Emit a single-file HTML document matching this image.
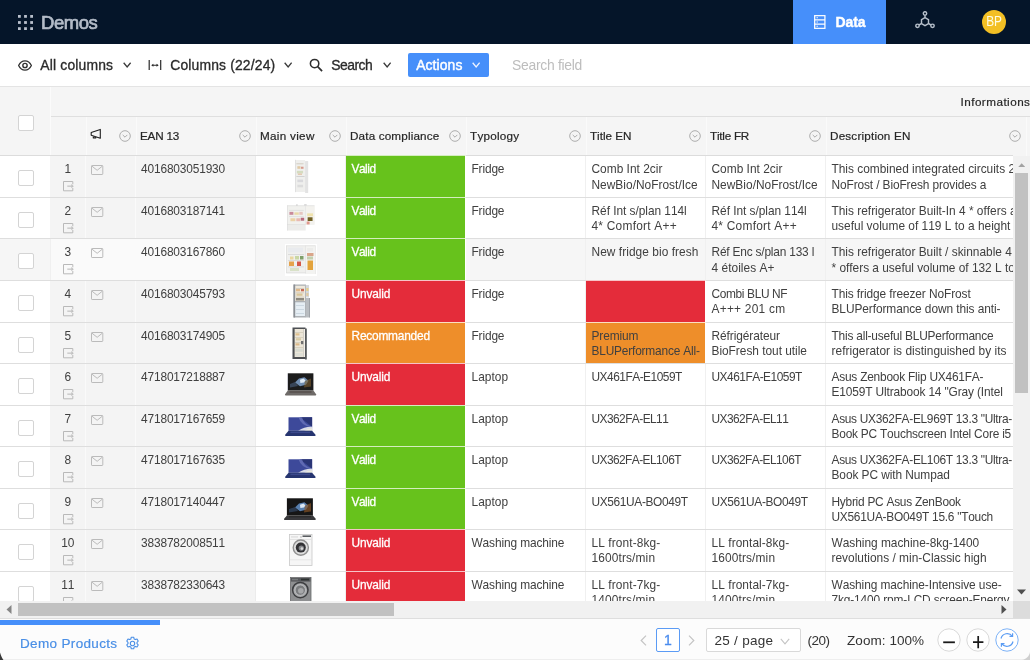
<!DOCTYPE html><html><head><meta charset="utf-8"><title>Demos</title><style>
*{box-sizing:border-box;margin:0;padding:0}
html,body{width:1030px;height:660px;overflow:hidden;background:#fff}
body{position:relative;font-family:"Liberation Sans",sans-serif;color:#262626;font-size:11.900px}
#app{position:absolute;left:0;top:0;width:1030px;height:660px;overflow:hidden;will-change:transform;background:#fff}
.abs{position:absolute}
#top{position:absolute;left:0;top:0;width:1030px;height:44px;background:#051529}
#tb{position:absolute;left:0;top:44px;width:1030px;height:42.400px;background:#fff}
.tbt{position:absolute;top:12.500px;font-size:13.900px;font-kerning:none;line-height:17px;color:#2b2b2b;white-space:nowrap;-webkit-text-stroke:.32px #2b2b2b}
#hd{position:absolute;left:0;top:86px;width:1030px;height:70px;background:#f5f5f5;border-top:1px solid #e4e4e4}
.hl{position:absolute;top:117px;height:38.500px;width:1px;background:#fafafa}
.ht{position:absolute;top:128px;line-height:15px;font-size:11.700px;font-kerning:none;color:#262626;white-space:nowrap;-webkit-text-stroke:.2px #262626}
.row{position:absolute;z-index:0;left:0;width:1013px;height:41.600px;border-top:1px solid #dedede;background:#fff}
.c{position:absolute;top:0;height:42px;border-right:1px solid #f0f0f0;padding:var(--pt) 0 0 5.500px;line-height:var(--lh);font-kerning:none;white-space:nowrap;overflow:hidden;color:#404040}
.g{background:#f4f4f4}
.cb{position:absolute;left:18px;width:16px;height:16px;border:1px solid #d4d4d4;border-radius:2px;background:#fff}
.im{position:absolute}
.st{color:#fff;-webkit-text-stroke:.28px #fff}
#ft{position:absolute;left:0;top:618px;width:1030px;height:42px;background:#fcfcfc;border-top:1px solid #dedede}
.ftt{position:absolute;font-kerning:none;font-size:13.500px;line-height:17px;color:#333;white-space:nowrap}
</style></head><body><svg width="0" height="0" style="position:absolute"><defs><filter id="b" x="-10%" y="-10%" width="120%" height="120%"><feGaussianBlur stdDeviation="0.45"/></filter></defs></svg><div id="app">
<div id="top">
<svg class="abs" style="left:18px;top:15px" width="15" height="15" viewBox="0 0 14 14"><rect x="0" y="0" width="2.600" height="2.600" fill="#b9c0cc"/><rect x="0" y="5.7" width="2.600" height="2.600" fill="#b9c0cc"/><rect x="0" y="11.4" width="2.600" height="2.600" fill="#b9c0cc"/><rect x="5.7" y="0" width="2.600" height="2.600" fill="#b9c0cc"/><rect x="5.7" y="5.7" width="2.600" height="2.600" fill="#b9c0cc"/><rect x="5.7" y="11.4" width="2.600" height="2.600" fill="#b9c0cc"/><rect x="11.4" y="0" width="2.600" height="2.600" fill="#b9c0cc"/><rect x="11.4" y="5.7" width="2.600" height="2.600" fill="#b9c0cc"/><rect x="11.4" y="11.4" width="2.600" height="2.600" fill="#b9c0cc"/></svg>
<div class="abs" style="left:41px;top:11.700px;font-size:18.500px;line-height:22px;color:#b4bcc8;-webkit-text-stroke:.7px #b4bcc8;font-kerning:none"><span style="letter-spacing:-0.475px">Demos</span></div>
<div class="abs" style="left:793px;top:0;width:93px;height:44px;background:#468ffa"></div>
<svg class="abs" style="left:814px;top:15px" width="11.600" height="14" viewBox="0 0 12 15" preserveAspectRatio="none"><rect x=".7" y=".7" width="10.600" height="13.600" fill="none" stroke="#fff" stroke-width="1.300"/><path d="M.7 5.200h10.600M.7 9.800h10.600" stroke="#fff" stroke-width="1.200"/><path d="M2.600 3h1.400M2.600 7.500h1.400M2.600 12h1.400" stroke="#fff" stroke-width="1.200"/></svg>
<div class="abs" style="left:835.400px;top:13px;font-size:14px;line-height:18px;font-weight:bold;color:#fff;-webkit-text-stroke:.4px #fff;font-kerning:none"><span style="letter-spacing:-0.048px">Data</span></div>
<svg class="abs" style="left:915px;top:11px" width="20" height="18" viewBox="0 0 20 18"><g fill="none" stroke="#b7bfca" stroke-width="1.450"><circle cx="10" cy="2.400" r="1.700"/><circle cx="2.500" cy="14.800" r="1.700"/><circle cx="17.500" cy="14.800" r="1.700"/><path d="M10 4.100v2.500M4 14l2.300-1.300M16 14l-2.300-1.300"/><path d="M10 6.600l3.500 2v4l-3.500 2-3.500-2v-4z"/></g></svg>
<div class="abs" style="left:982px;top:10px;width:24px;height:24px;border-radius:12px;background:#f3bf24;color:#fffbe2;font-size:13.800px;line-height:24.500px;text-align:center"><span style="display:inline-block;transform:scaleX(.86);letter-spacing:-.2px">BP</span></div>
</div>
<div id="tb">
<svg class="abs" style="left:18px;top:15.500px" width="14" height="11" viewBox="0 0 14 11"><path d="M.6 5.500C2.200 2.300 4.400.9 7 .9s4.800 1.400 6.400 4.600C11.800 8.700 9.600 10.100 7 10.100S2.200 8.700.6 5.500z" fill="none" stroke="#333" stroke-width="1.300"/><circle cx="7" cy="5.500" r="2.150" fill="none" stroke="#333" stroke-width="1.400"/></svg>
<div class="tbt" style="left:40.300px"><span style="letter-spacing:0.173px">All columns</span></div>
<svg style="position:absolute;left:123.4px;top:18px" width="8.3" height="5.81" viewBox="0 0 10 7"><path d="M0.800 0.900L5 5.900l4.200-5" fill="none" stroke="#3a3a3a" stroke-width="1.57"/></svg>
<svg class="abs" style="left:148px;top:15.600px" width="14" height="10.500" viewBox="0 0 14 10.500"><path d="M1.200 0v10.500M12.700 0v10.500" fill="none" stroke="#2a2a2a" stroke-width="1.200"/><path d="M4.500 5.250h5" stroke="#2a2a2a" stroke-width="1"/><path d="M3.200 5.250l2.200-1.500v3zM10.700 5.250l-2.200-1.500v3z" fill="#2a2a2a"/></svg>
<div class="tbt" style="left:170.300px"><span style="letter-spacing:0.154px">Columns (22/24)</span></div>
<svg style="position:absolute;left:283.6px;top:18px" width="8.3" height="5.81" viewBox="0 0 10 7"><path d="M0.800 0.900L5 5.900l4.200-5" fill="none" stroke="#3a3a3a" stroke-width="1.57"/></svg>
<svg class="abs" style="left:309px;top:14px" width="14" height="14" viewBox="0 0 14 14"><circle cx="5.600" cy="5.600" r="4.200" fill="none" stroke="#2e2e2e" stroke-width="1.550"/><path d="M8.700 8.700l4.400 4.400" stroke="#2e2e2e" stroke-width="1.700"/></svg>
<div class="tbt" style="left:331.300px"><span style="letter-spacing:-0.528px">Search</span></div>
<svg style="position:absolute;left:382.6px;top:18px" width="8.3" height="5.81" viewBox="0 0 10 7"><path d="M0.800 0.900L5 5.900l4.200-5" fill="none" stroke="#3a3a3a" stroke-width="1.57"/></svg>
<div class="abs" style="left:408px;top:9px;width:81px;height:24px;background:#468ffa;border-radius:2px"></div>
<div class="tbt" style="left:416.200px;color:#fff;-webkit-text-stroke:.45px #fff"><span style="letter-spacing:0.103px">Actions</span></div>
<svg style="position:absolute;left:471.6px;top:18px" width="8.3" height="5.81" viewBox="0 0 10 7"><path d="M0.800 0.900L5 5.900l4.200-5" fill="none" stroke="#eef4ff" stroke-width="1.57"/></svg>
<div class="tbt" style="left:512px;color:#bdbdbd;-webkit-text-stroke:0"><span style="letter-spacing:-0.273px">Search field</span></div>
</div>
<div id="hd"></div>
<div class="abs" style="left:50px;top:116px;width:980px;height:1px;background:#dfdfdf"></div>
<div class="abs" style="left:50px;top:87px;width:1px;height:69px;background:#fbfbfb"></div>
<div class="hl" style="left:85.5px"></div>
<div class="hl" style="left:135.5px"></div>
<div class="hl" style="left:255.5px"></div>
<div class="hl" style="left:345.5px"></div>
<div class="hl" style="left:465.5px"></div>
<div class="hl" style="left:585.5px"></div>
<div class="hl" style="left:705.5px"></div>
<div class="hl" style="left:825.5px"></div>
<div class="hl" style="left:1025.5px"></div>
<div class="cb" style="top:115px"></div>
<div class="ht" style="left:960.500px;top:94px"><span style="letter-spacing:0.466px">Informations</span></div>
<svg class="abs" style="left:90px;top:128px" width="12" height="12" viewBox="0 0 12 12"><path d="M1.200 4.400L10.300 1.400v8.800L1.200 7.200z M3.300 7.900v2h2.400V8.700" fill="none" stroke="#1f1f1f" stroke-width="1.100" stroke-linejoin="round"/></svg>
<svg style="position:absolute;left:119px;top:129.7px" width="12" height="12" viewBox="0 0 12 12"><circle cx="6" cy="6" r="5.300" fill="none" stroke="#adadad" stroke-width="1"/><path d="M3.700 4.900l2.300 2.300L8.300 4.900" fill="none" stroke="#adadad" stroke-width="1"/></svg>
<div class="ht" style="left:140.0px"><span style="letter-spacing:-0.184px">EAN 13</span></div>
<svg style="position:absolute;left:239.2px;top:129.7px" width="12" height="12" viewBox="0 0 12 12"><circle cx="6" cy="6" r="5.300" fill="none" stroke="#adadad" stroke-width="1"/><path d="M3.700 4.900l2.300 2.300L8.300 4.900" fill="none" stroke="#adadad" stroke-width="1"/></svg>
<div class="ht" style="left:260.0px"><span style="letter-spacing:0.298px">Main view</span></div>
<svg style="position:absolute;left:329.2px;top:129.7px" width="12" height="12" viewBox="0 0 12 12"><circle cx="6" cy="6" r="5.300" fill="none" stroke="#adadad" stroke-width="1"/><path d="M3.700 4.900l2.300 2.300L8.300 4.900" fill="none" stroke="#adadad" stroke-width="1"/></svg>
<div class="ht" style="left:350.0px"><span style="letter-spacing:0.154px">Data compliance</span></div>
<svg style="position:absolute;left:449.2px;top:129.7px" width="12" height="12" viewBox="0 0 12 12"><circle cx="6" cy="6" r="5.300" fill="none" stroke="#adadad" stroke-width="1"/><path d="M3.700 4.900l2.300 2.300L8.300 4.900" fill="none" stroke="#adadad" stroke-width="1"/></svg>
<div class="ht" style="left:470.0px"><span style="letter-spacing:0.247px">Typology</span></div>
<svg style="position:absolute;left:569.2px;top:129.7px" width="12" height="12" viewBox="0 0 12 12"><circle cx="6" cy="6" r="5.300" fill="none" stroke="#adadad" stroke-width="1"/><path d="M3.700 4.900l2.300 2.300L8.300 4.900" fill="none" stroke="#adadad" stroke-width="1"/></svg>
<div class="ht" style="left:590.0px"><span style="letter-spacing:-0.030px">Title EN</span></div>
<svg style="position:absolute;left:689.2px;top:129.7px" width="12" height="12" viewBox="0 0 12 12"><circle cx="6" cy="6" r="5.300" fill="none" stroke="#adadad" stroke-width="1"/><path d="M3.700 4.900l2.300 2.300L8.300 4.900" fill="none" stroke="#adadad" stroke-width="1"/></svg>
<div class="ht" style="left:710.0px"><span style="letter-spacing:-0.236px">Title FR</span></div>
<svg style="position:absolute;left:809.2px;top:129.7px" width="12" height="12" viewBox="0 0 12 12"><circle cx="6" cy="6" r="5.300" fill="none" stroke="#adadad" stroke-width="1"/><path d="M3.700 4.900l2.300 2.300L8.300 4.900" fill="none" stroke="#adadad" stroke-width="1"/></svg>
<div class="ht" style="left:830.0px"><span style="letter-spacing:0.190px">Description EN</span></div>
<svg style="position:absolute;left:1009.2px;top:129.7px" width="12" height="12" viewBox="0 0 12 12"><circle cx="6" cy="6" r="5.300" fill="none" stroke="#adadad" stroke-width="1"/><path d="M3.700 4.900l2.300 2.300L8.300 4.900" fill="none" stroke="#adadad" stroke-width="1"/></svg>
<div class="row" style="top:155px;height:42px;--pt:5.37px;--lh:16px;border-top-color:#dcdcdc">
<div class="c" style="left:0;width:50.500px;background:#fff;border-right-color:#f4f4f4"></div>
<div class="cb" style="top:14px"></div>
<div class="c" style="left:50.500px;width:35.500px;background:#f4f4f4;border-right-color:#fafafa;padding-left:0;text-align:center">1</div>
<div class="abs" style="left:0;top:.5px;z-index:2"><svg style="position:absolute;left:62.600px;top:24.200px" width="12" height="12" viewBox="0 0 12 12"><path d="M9.800 3.300V.5H.5v9.300h9.300V7" fill="none" stroke="#b9b9b9" stroke-width="1"/><path d="M4.300 5.150h4.500" fill="none" stroke="#c0c0c0" stroke-width="1.200"/><path d="M8.300 3.100l2.500 2.050L8.300 7.200z" fill="#c0c0c0"/></svg><svg style="position:absolute;left:90.600px;top:8.200px" width="13" height="11" viewBox="0 0 13 11"><rect x=".5" y=".5" width="11.300" height="9" rx=".6" fill="none" stroke="#bbbbbb" stroke-width="1"/><path d="M1 1.200l5.150 4.100L11.300 1.200" fill="none" stroke="#bbbbbb" stroke-width="1"/></svg></div>
<div class="abs" style="left:0;top:0.50px;z-index:2"><svg class="im" style="left:293.600px;top:2.700px" width="16" height="35" viewBox="0 0 15 34"><g filter="url(#b)"><rect x="1" y="1" width="9.5" height="31" fill="#efefed"/><rect x="10.5" y="2" width="3" height="31" fill="#e3e3e3"/><rect x="0.8" y="0.8" width="0.7" height="31.4" fill="#d9d9d9"/><rect x="2" y="4" width="7" height="1.2" fill="#d8d4ca"/><rect x="3" y="7" width="3" height="2.5" fill="#e0c9a4"/><rect x="6.5" y="7.5" width="2.5" height="2" fill="#d69a8c"/><rect x="2.5" y="11.5" width="6" height="2.5" fill="#d4dcc0"/><rect x="2" y="16.5" width="8" height="1" fill="#d2d2d2"/><rect x="3" y="20" width="5.5" height="2.5" fill="#d9d9dc"/><rect x="3" y="25" width="5.5" height="2.5" fill="#dcdcdc"/><rect x="3.5" y="14" width="4" height="1.5" fill="#e3c9b0"/></g></svg></div>
<div class="c" style="left:86px;width:50px;background:#f4f4f4;border-right-color:#fafafa"></div>
<div class="c" style="left:136px;width:120px;background:#f4f4f4;border-right-color:#ececec;padding-left:5.100px"><span style="letter-spacing:-0.157px">4016803051930</span></div>
<div class="c" style="left:256px;width:90px;background:#fff"></div>
<div class="c st" style="left:346px;width:120px;background:#67c21c;border-right:1.400px solid #fff;border-top:1px solid #d4edbf;margin-top:-1px;height:43px;padding-top:var(--pt)"><span style="letter-spacing:-0.465px">Valid</span></div>
<div class="c" style="left:466px;width:120px;background:#fff"><span style="letter-spacing:-0.149px">Fridge</span></div>
<div class="c" style="left:586px;width:120px;background:#fff"><span style="letter-spacing:0.012px">Comb Int 2cir</span><br><span style="letter-spacing:0.026px">NewBio/NoFrost/Ice</span></div>
<div class="c" style="left:706px;width:120px;background:#fff"><span style="letter-spacing:0.012px">Comb Int 2cir</span><br><span style="letter-spacing:0.026px">NewBio/NoFrost/Ice</span></div>
<div class="c" style="left:826px;width:200px;background:#fff"><span style="letter-spacing:-0.007px">This combined integrated circuits 2</span><br><span style="letter-spacing:-0.112px">NoFrost / BioFresh provides a</span></div>
</div>
<div class="row" style="top:197px;height:41px;--pt:5.87px;--lh:15px">
<div class="c" style="left:0;width:50.500px;background:#fff;border-right-color:#f4f4f4"></div>
<div class="cb" style="top:14px"></div>
<div class="c" style="left:50.500px;width:35.500px;background:#f4f4f4;border-right-color:#fafafa;padding-left:0;text-align:center">2</div>
<div class="abs" style="left:0;top:.5px;z-index:2"><svg style="position:absolute;left:62.600px;top:24.200px" width="12" height="12" viewBox="0 0 12 12"><path d="M9.800 3.300V.5H.5v9.300h9.300V7" fill="none" stroke="#b9b9b9" stroke-width="1"/><path d="M4.300 5.150h4.500" fill="none" stroke="#c0c0c0" stroke-width="1.200"/><path d="M8.300 3.100l2.500 2.050L8.300 7.200z" fill="#c0c0c0"/></svg><svg style="position:absolute;left:90.600px;top:8.200px" width="13" height="11" viewBox="0 0 13 11"><rect x=".5" y=".5" width="11.300" height="9" rx=".6" fill="none" stroke="#bbbbbb" stroke-width="1"/><path d="M1 1.200l5.150 4.100L11.300 1.200" fill="none" stroke="#bbbbbb" stroke-width="1"/></svg></div>
<div class="abs" style="left:0;top:0.10px;z-index:2"><svg class="im" style="left:285.700px;top:6.300px" width="30.500" height="28.500" viewBox="0 0 30 29"><g filter="url(#b)"><rect x="0.5" y="1.5" width="28" height="19.5" fill="#f1f1ee"/><rect x="0.5" y="21" width="19" height="6" fill="#ececea"/><rect x="19.5" y="2" width="9" height="19" fill="#f3f2ee"/><rect x="0.5" y="1.5" width="28" height="0.7" fill="#dedede"/><rect x="0.5" y="1.5" width="0.7" height="25.5" fill="#dedede"/><rect x="19" y="2" width="0.6" height="19" fill="#e2e2e2"/><rect x="0.5" y="20.7" width="19" height="0.6" fill="#dadada"/><rect x="2.5" y="6" width="15" height="0.8" fill="#dcdcdc"/><rect x="3" y="8" width="4" height="3" fill="#c98a9a"/><rect x="8" y="8.5" width="4.5" height="2.5" fill="#ead9a8"/><rect x="13" y="8" width="3.5" height="3" fill="#e6c5c0"/><rect x="2.5" y="12.5" width="15" height="0.8" fill="#dcdcdc"/><rect x="4" y="14.5" width="5" height="3" fill="#ecd2a6"/><rect x="10" y="14.5" width="4" height="3" fill="#e9b9b0"/><rect x="14.5" y="14" width="3.5" height="3" fill="#b86a7c"/><rect x="21.5" y="13.5" width="5" height="3.8" fill="#6f5f24"/><rect x="21" y="9.5" width="6" height="3" fill="#efe2ae"/><rect x="20.5" y="17.8" width="3" height="3" fill="#e0978c"/><rect x="10" y="0.4" width="1.2" height="1.2" fill="#bdbdbd"/><rect x="18" y="0.4" width="2.5" height="1" fill="#c4c4c4"/></g></svg></div>
<div class="c" style="left:86px;width:50px;background:#f4f4f4;border-right-color:#fafafa"></div>
<div class="c" style="left:136px;width:120px;background:#f4f4f4;border-right-color:#ececec;padding-left:5.100px"><span style="letter-spacing:-0.157px">4016803187141</span></div>
<div class="c" style="left:256px;width:90px;background:#fff"></div>
<div class="c st" style="left:346px;width:120px;background:#67c21c;border-right:1.400px solid #fff;border-top:1px solid #d4edbf;margin-top:-1px;height:43px;padding-top:var(--pt)"><span style="letter-spacing:-0.465px">Valid</span></div>
<div class="c" style="left:466px;width:120px;background:#fff"><span style="letter-spacing:-0.149px">Fridge</span></div>
<div class="c" style="left:586px;width:120px;background:#fff"><span style="letter-spacing:-0.034px">Réf Int s/plan 114l</span><br><span style="letter-spacing:0.247px">4* Comfort A++</span></div>
<div class="c" style="left:706px;width:120px;background:#fff"><span style="letter-spacing:-0.034px">Réf Int s/plan 114l</span><br><span style="letter-spacing:0.247px">4* Comfort A++</span></div>
<div class="c" style="left:826px;width:200px;background:#fff"><span style="letter-spacing:-0.001px">This refrigerator Built-In 4 * offers a</span><br><span style="letter-spacing:0.011px">useful volume of 119 L to a height</span></div>
</div>
<div class="row" style="top:238px;height:42px;--pt:5.37px;--lh:16px">
<div class="c" style="left:0;width:50.500px;background:#f6f6f6;border-right-color:#f0f0f0"></div>
<div class="cb" style="top:14px"></div>
<div class="c" style="left:50.500px;width:35.500px;background:#fafafa;border-right-color:#fafafa;padding-left:0;text-align:center">3</div>
<div class="abs" style="left:0;top:.5px;z-index:2"><svg style="position:absolute;left:62.600px;top:24.200px" width="12" height="12" viewBox="0 0 12 12"><path d="M9.800 3.300V.5H.5v9.300h9.300V7" fill="none" stroke="#b9b9b9" stroke-width="1"/><path d="M4.300 5.150h4.500" fill="none" stroke="#c0c0c0" stroke-width="1.200"/><path d="M8.300 3.100l2.500 2.050L8.300 7.200z" fill="#c0c0c0"/></svg><svg style="position:absolute;left:90.600px;top:8.200px" width="13" height="11" viewBox="0 0 13 11"><rect x=".5" y=".5" width="11.300" height="9" rx=".6" fill="none" stroke="#bbbbbb" stroke-width="1"/><path d="M1 1.200l5.150 4.100L11.300 1.200" fill="none" stroke="#bbbbbb" stroke-width="1"/></svg></div>
<div class="abs" style="left:0;top:0.70px;z-index:2"><svg class="im" style="left:284.7px;top:4.1px" width="32" height="32" viewBox="0 0 32 32"><g filter="url(#b)"><rect x="0" y="0" width="32" height="32" fill="#ffffff"/><rect x="1.2" y="1.5" width="19.5" height="27.5" fill="#f0f0ee"/><rect x="20.5" y="1" width="10" height="29" fill="#f3f3f1"/><rect x="1.2" y="1.5" width="0.7" height="27.5" fill="#dcdcdc"/><rect x="1.2" y="1.5" width="29" height="0.7" fill="#e0e0e0"/><rect x="20.3" y="1.5" width="0.6" height="28" fill="#dedede"/><rect x="1.2" y="28.6" width="19.5" height="0.7" fill="#d8d8d8"/><rect x="30" y="1.5" width="0.6" height="28.5" fill="#e2e2e2"/><rect x="3" y="3.5" width="15" height="5" fill="#e9ebee"/><rect x="3" y="10" width="16" height="0.8" fill="#d6d6d6"/><rect x="3" y="16" width="16" height="0.8" fill="#d6d6d6"/><rect x="3" y="22.5" width="16" height="0.8" fill="#d6d6d6"/><rect x="4" y="17.5" width="5" height="4.5" fill="#e5a24c"/><rect x="10" y="12" width="4" height="3.5" fill="#c9d7a4"/><rect x="12" y="17.5" width="4" height="4.5" fill="#d4584a"/><rect x="15" y="12" width="3.5" height="3.5" fill="#7fa06a"/><rect x="5" y="12.5" width="3.5" height="3" fill="#ead7a0"/><rect x="5" y="24" width="9" height="3" fill="#d9e2c8"/><rect x="22.5" y="16.5" width="5.5" height="9.5" fill="#e3a33e"/><rect x="22" y="9" width="6.5" height="3" fill="#d9a58a"/><rect x="22" y="12.5" width="6" height="3" fill="#c3cfae"/><rect x="22" y="4" width="6" height="3.5" fill="#ececea"/></g></svg></div>
<div class="c" style="left:86px;width:50px;background:#fafafa;border-right-color:#fafafa"></div>
<div class="c" style="left:136px;width:120px;background:#fafafa;border-right-color:#ececec;padding-left:5.100px"><span style="letter-spacing:-0.157px">4016803167860</span></div>
<div class="c" style="left:256px;width:90px;background:#f6f6f6"></div>
<div class="c st" style="left:346px;width:120px;background:#67c21c;border-right:1.400px solid #fff;border-top:1px solid #d4edbf;margin-top:-1px;height:43px;padding-top:var(--pt)"><span style="letter-spacing:-0.465px">Valid</span></div>
<div class="c" style="left:466px;width:120px;background:#f6f6f6"><span style="letter-spacing:-0.149px">Fridge</span></div>
<div class="c" style="left:586px;width:120px;background:#f6f6f6"><span style="letter-spacing:0.061px">New fridge bio fresh</span></div>
<div class="c" style="left:706px;width:120px;background:#f6f6f6"><span style="letter-spacing:-0.191px">Réf Enc s/plan 133 l</span><br><span style="letter-spacing:0.042px">4 étoiles A+</span></div>
<div class="c" style="left:826px;width:200px;background:#f6f6f6"><span style="letter-spacing:-0.002px">This refrigerator Built / skinnable 4</span><br><span style="letter-spacing:-0.013px">* offers a useful volume of 132 L to</span></div>
</div>
<div class="row" style="top:280px;height:42px;--pt:5.87px;--lh:15px">
<div class="c" style="left:0;width:50.500px;background:#fff;border-right-color:#f4f4f4"></div>
<div class="cb" style="top:14px"></div>
<div class="c" style="left:50.500px;width:35.500px;background:#f4f4f4;border-right-color:#fafafa;padding-left:0;text-align:center">4</div>
<div class="abs" style="left:0;top:.5px;z-index:2"><svg style="position:absolute;left:62.600px;top:24.200px" width="12" height="12" viewBox="0 0 12 12"><path d="M9.800 3.300V.5H.5v9.300h9.300V7" fill="none" stroke="#b9b9b9" stroke-width="1"/><path d="M4.300 5.150h4.500" fill="none" stroke="#c0c0c0" stroke-width="1.200"/><path d="M8.300 3.100l2.500 2.050L8.300 7.200z" fill="#c0c0c0"/></svg><svg style="position:absolute;left:90.600px;top:8.200px" width="13" height="11" viewBox="0 0 13 11"><rect x=".5" y=".5" width="11.300" height="9" rx=".6" fill="none" stroke="#bbbbbb" stroke-width="1"/><path d="M1 1.200l5.150 4.100L11.300 1.200" fill="none" stroke="#bbbbbb" stroke-width="1"/></svg></div>
<div class="abs" style="left:0;top:0.30px;z-index:2"><svg class="im" style="left:292.6px;top:3px" width="18" height="34.5" viewBox="0 0 18 34.5"><g filter="url(#b)"><rect x="0.5" y="0.5" width="12.5" height="33" fill="#aeb2b6"/><rect x="0.5" y="0.5" width="1.6" height="33" fill="#8c9095"/><rect x="2.3" y="1.8" width="9.7" height="15.2" fill="#efe9dc"/><rect x="2.3" y="18.3" width="9.7" height="13.7" fill="#e6eef4"/><rect x="12.8" y="14" width="4" height="19.5" fill="#b9bdc1"/><rect x="12.8" y="1" width="3.2" height="12.5" fill="#d5d8da"/><rect x="16.3" y="14" width="0.7" height="19.5" fill="#8f9398"/><rect x="3" y="4" width="8" height="0.7" fill="#c9c2b2"/><rect x="3" y="5" width="4" height="2.3" fill="#e0b98a"/><rect x="8" y="5" width="3" height="2.3" fill="#c96a55"/><rect x="3" y="8.5" width="8" height="0.7" fill="#c9c2b2"/><rect x="3.5" y="9.5" width="6" height="2.3" fill="#d8c59a"/><rect x="3" y="12.7" width="8" height="0.7" fill="#c9c2b2"/><rect x="3" y="14" width="8" height="2.5" fill="#8e8a80"/><rect x="3" y="21" width="8" height="0.8" fill="#c6d3dc"/><rect x="3" y="25" width="8" height="0.8" fill="#c6d3dc"/><rect x="3" y="29" width="8" height="0.8" fill="#c6d3dc"/><rect x="13.3" y="4" width="2.2" height="3" fill="#e3cf8a"/><rect x="13.3" y="9" width="2.2" height="3" fill="#e0c9a0"/></g></svg></div>
<div class="c" style="left:86px;width:50px;background:#f4f4f4;border-right-color:#fafafa"></div>
<div class="c" style="left:136px;width:120px;background:#f4f4f4;border-right-color:#ececec;padding-left:5.100px"><span style="letter-spacing:-0.157px">4016803045793</span></div>
<div class="c" style="left:256px;width:90px;background:#fff"></div>
<div class="c st" style="left:346px;width:120px;background:#e42c3a;border-right:1.400px solid #fff;border-top:1px solid #f7c3c7;margin-top:-1px;height:43px;padding-top:var(--pt)"><span style="letter-spacing:-0.131px">Unvalid</span></div>
<div class="c" style="left:466px;width:120px;background:#fff"><span style="letter-spacing:-0.149px">Fridge</span></div>
<div class="c" style="left:586px;width:120px;background:#e42c3a;border-right:1.400px solid #fff;border-top:1px solid #f7c3c7;margin-top:-1px;height:43px"></div>
<div class="c" style="left:706px;width:120px;background:#fff"><span style="letter-spacing:-0.352px">Combi BLU NF</span><br><span style="letter-spacing:0.257px">A+++ 201 cm</span></div>
<div class="c" style="left:826px;width:200px;background:#fff"><span style="letter-spacing:-0.085px">This fridge freezer NoFrost</span><br><span style="letter-spacing:-0.076px">BLUPerformance down this anti-</span></div>
</div>
<div class="row" style="top:322px;height:41px;--pt:5.87px;--lh:15px">
<div class="c" style="left:0;width:50.500px;background:#fff;border-right-color:#f4f4f4"></div>
<div class="cb" style="top:14px"></div>
<div class="c" style="left:50.500px;width:35.500px;background:#f4f4f4;border-right-color:#fafafa;padding-left:0;text-align:center">5</div>
<div class="abs" style="left:0;top:.5px;z-index:2"><svg style="position:absolute;left:62.600px;top:24.200px" width="12" height="12" viewBox="0 0 12 12"><path d="M9.800 3.300V.5H.5v9.300h9.300V7" fill="none" stroke="#b9b9b9" stroke-width="1"/><path d="M4.300 5.150h4.500" fill="none" stroke="#c0c0c0" stroke-width="1.200"/><path d="M8.300 3.100l2.500 2.050L8.300 7.200z" fill="#c0c0c0"/></svg><svg style="position:absolute;left:90.600px;top:8.200px" width="13" height="11" viewBox="0 0 13 11"><rect x=".5" y=".5" width="11.300" height="9" rx=".6" fill="none" stroke="#bbbbbb" stroke-width="1"/><path d="M1 1.200l5.150 4.100L11.300 1.200" fill="none" stroke="#bbbbbb" stroke-width="1"/></svg></div>
<div class="abs" style="left:0;top:-0.10px;z-index:2"><svg class="im" style="left:292.4px;top:3.7px" width="16" height="33" viewBox="0 0 16 33"><g filter="url(#b)"><rect x="0.5" y="0.5" width="13" height="31.5" fill="#4d4f52"/><rect x="2.6" y="2" width="9.2" height="28" fill="#ece6d8"/><rect x="13" y="1.5" width="1.8" height="31" fill="#55585b"/><rect x="11.8" y="2" width="1.2" height="28" fill="#f4f1ea"/><rect x="3" y="5" width="8" height="0.7" fill="#cfc7b5"/><rect x="3.5" y="6.3" width="4" height="2.2" fill="#e0c08e"/><rect x="3" y="10" width="8" height="0.7" fill="#cfc7b5"/><rect x="4" y="11.2" width="5" height="2.2" fill="#d9cba4"/><rect x="3" y="15" width="8" height="0.7" fill="#cfc7b5"/><rect x="9" y="14" width="2.3" height="3.2" fill="#6f6f6f"/><rect x="3.5" y="16.3" width="4" height="2.2" fill="#dcb98a"/><rect x="3" y="20" width="8" height="0.7" fill="#cfc7b5"/><rect x="3.3" y="21.5" width="7.5" height="3.3" fill="#d7dad0"/><rect x="3.3" y="26" width="7.5" height="3.3" fill="#dedfd6"/></g></svg></div>
<div class="c" style="left:86px;width:50px;background:#f4f4f4;border-right-color:#fafafa"></div>
<div class="c" style="left:136px;width:120px;background:#f4f4f4;border-right-color:#ececec;padding-left:5.100px"><span style="letter-spacing:-0.157px">4016803174905</span></div>
<div class="c" style="left:256px;width:90px;background:#fff"></div>
<div class="c st" style="left:346px;width:120px;background:#ee8e2a;border-right:1.400px solid #fff;border-top:1px solid #fadfc3;margin-top:-1px;height:43px;padding-top:var(--pt)"><span style="letter-spacing:-0.210px">Recommanded</span></div>
<div class="c" style="left:466px;width:120px;background:#fff"><span style="letter-spacing:-0.149px">Fridge</span></div>
<div class="c" style="left:586px;width:120px;background:#ee8e2a;border-right:1.400px solid #fff;border-top:1px solid #fadfc3;margin-top:-1px;height:43px"><span style="letter-spacing:-0.096px">Premium</span><br><span style="letter-spacing:-0.184px">BLUPerformance All-</span></div>
<div class="c" style="left:706px;width:120px;background:#fff"><span style="letter-spacing:-0.079px">Réfrigérateur</span><br><span style="letter-spacing:-0.023px">BioFresh tout utile</span></div>
<div class="c" style="left:826px;width:200px;background:#fff"><span style="letter-spacing:-0.198px">This all-useful BLUPerformance</span><br><span style="letter-spacing:0.035px">refrigerator is distinguished by its</span></div>
</div>
<div class="row" style="top:363px;height:42px;--pt:5.87px;--lh:15px">
<div class="c" style="left:0;width:50.500px;background:#fff;border-right-color:#f4f4f4"></div>
<div class="cb" style="top:14px"></div>
<div class="c" style="left:50.500px;width:35.500px;background:#f4f4f4;border-right-color:#fafafa;padding-left:0;text-align:center">6</div>
<div class="abs" style="left:0;top:.5px;z-index:2"><svg style="position:absolute;left:62.600px;top:24.200px" width="12" height="12" viewBox="0 0 12 12"><path d="M9.800 3.300V.5H.5v9.300h9.300V7" fill="none" stroke="#b9b9b9" stroke-width="1"/><path d="M4.300 5.150h4.500" fill="none" stroke="#c0c0c0" stroke-width="1.200"/><path d="M8.300 3.100l2.500 2.050L8.300 7.200z" fill="#c0c0c0"/></svg><svg style="position:absolute;left:90.600px;top:8.200px" width="13" height="11" viewBox="0 0 13 11"><rect x=".5" y=".5" width="11.300" height="9" rx=".6" fill="none" stroke="#bbbbbb" stroke-width="1"/><path d="M1 1.200l5.150 4.100L11.300 1.200" fill="none" stroke="#bbbbbb" stroke-width="1"/></svg></div>
<div class="abs" style="left:0;top:0.50px;z-index:2"><svg class="im" style="left:284.7px;top:8.9px" width="32" height="23" viewBox="0 0 32 23"><g filter="url(#b)"><rect x="2.8" y="0.3" width="25.6" height="17.3" fill="#1d1d1f"/><path d="M2.800 17.400h25.600l2.900 4.200q0 .9-1 .9h-29.400q-1 0-1-.9z" fill="#6e6a67"/><rect x="4.5" y="18.2" width="22" height="1.6" fill="#57534f"/><path d="M10 9.500l4-4 5.500-1.200 4 3.500-2.500 4-6 1.500z" fill="#6f8db0"/><path d="M15 6.800l3.500-1.200 2 1.800-1.600 2.200-3.500 .3z" fill="#dfe9f3"/><path d="M20 8l6-2.500v8l-7 1z" fill="#7a5c2c" opacity=".6"/><path d="M5 11l5-2 3 4-8 1.500z" fill="#3b4a5e" opacity=".9"/></g></svg></div>
<div class="c" style="left:86px;width:50px;background:#f4f4f4;border-right-color:#fafafa"></div>
<div class="c" style="left:136px;width:120px;background:#f4f4f4;border-right-color:#ececec;padding-left:5.100px"><span style="letter-spacing:-0.157px">4718017218887</span></div>
<div class="c" style="left:256px;width:90px;background:#fff"></div>
<div class="c st" style="left:346px;width:120px;background:#e42c3a;border-right:1.400px solid #fff;border-top:1px solid #f7c3c7;margin-top:-1px;height:43px;padding-top:var(--pt)"><span style="letter-spacing:-0.131px">Unvalid</span></div>
<div class="c" style="left:466px;width:120px;background:#fff"><span style="letter-spacing:0.038px">Laptop</span></div>
<div class="c" style="left:586px;width:120px;background:#fff"><span style="letter-spacing:-0.486px">UX461FA-E1059T</span></div>
<div class="c" style="left:706px;width:120px;background:#fff"><span style="letter-spacing:-0.486px">UX461FA-E1059T</span></div>
<div class="c" style="left:826px;width:200px;background:#fff"><span style="letter-spacing:-0.214px">Asus Zenbook Flip UX461FA-</span><br><span style="letter-spacing:-0.133px">E1059T Ultrabook 14 "Gray (Intel</span></div>
</div>
<div class="row" style="top:405px;height:41px;--pt:5.87px;--lh:15px">
<div class="c" style="left:0;width:50.500px;background:#fff;border-right-color:#f4f4f4"></div>
<div class="cb" style="top:14px"></div>
<div class="c" style="left:50.500px;width:35.500px;background:#f4f4f4;border-right-color:#fafafa;padding-left:0;text-align:center">7</div>
<div class="abs" style="left:0;top:.5px;z-index:2"><svg style="position:absolute;left:62.600px;top:24.200px" width="12" height="12" viewBox="0 0 12 12"><path d="M9.800 3.300V.5H.5v9.300h9.300V7" fill="none" stroke="#b9b9b9" stroke-width="1"/><path d="M4.300 5.150h4.500" fill="none" stroke="#c0c0c0" stroke-width="1.200"/><path d="M8.300 3.100l2.500 2.050L8.300 7.200z" fill="#c0c0c0"/></svg><svg style="position:absolute;left:90.600px;top:8.200px" width="13" height="11" viewBox="0 0 13 11"><rect x=".5" y=".5" width="11.300" height="9" rx=".6" fill="none" stroke="#bbbbbb" stroke-width="1"/><path d="M1 1.200l5.150 4.100L11.300 1.200" fill="none" stroke="#bbbbbb" stroke-width="1"/></svg></div>
<div class="abs" style="left:0;top:0.10px;z-index:2"><svg class="im" style="left:285px;top:11.3px" width="31" height="19.5" viewBox="0 0 31 19.5"><g filter="url(#b)"><rect x="3.5" y="0.3" width="23.6" height="13.5" fill="#3d4a9a"/><path d="M15 .3h12.100v9.500z" fill="#2a3576"/><path d="M13.500 .3h3.500q1.500 7 10.100 9.500v0.800q-11-1.500-13.600-10.300z" fill="#6f79bd" opacity=".7"/><path d="M27.100 9.800v4h-14q7-4.500 14-4z" fill="#d9dbe6"/><path d="M27.100 11.600v2.200h-8q4-2.400 8-2.200z" fill="#eceadc"/><path d="M3.500 13.800h23.600l3.600 4.300q0 1-1 1h-28.700q-1 0-1-1z" fill="#27356f"/><rect x="5.5" y="14.6" width="19.6" height="1.5" fill="#3a4a8c"/></g></svg></div>
<div class="c" style="left:86px;width:50px;background:#f4f4f4;border-right-color:#fafafa"></div>
<div class="c" style="left:136px;width:120px;background:#f4f4f4;border-right-color:#ececec;padding-left:5.100px"><span style="letter-spacing:-0.157px">4718017167659</span></div>
<div class="c" style="left:256px;width:90px;background:#fff"></div>
<div class="c st" style="left:346px;width:120px;background:#67c21c;border-right:1.400px solid #fff;border-top:1px solid #d4edbf;margin-top:-1px;height:43px;padding-top:var(--pt)"><span style="letter-spacing:-0.465px">Valid</span></div>
<div class="c" style="left:466px;width:120px;background:#fff"><span style="letter-spacing:0.038px">Laptop</span></div>
<div class="c" style="left:586px;width:120px;background:#fff"><span style="letter-spacing:-0.546px">UX362FA-EL11</span></div>
<div class="c" style="left:706px;width:120px;background:#fff"><span style="letter-spacing:-0.546px">UX362FA-EL11</span></div>
<div class="c" style="left:826px;width:200px;background:#fff"><span style="letter-spacing:-0.296px">Asus UX362FA-EL969T 13.3 "Ultra-</span><br><span style="letter-spacing:-0.209px">Book PC Touchscreen Intel Core i5</span></div>
</div>
<div class="row" style="top:446px;height:42px;--pt:5.87px;--lh:15px">
<div class="c" style="left:0;width:50.500px;background:#fff;border-right-color:#f4f4f4"></div>
<div class="cb" style="top:14px"></div>
<div class="c" style="left:50.500px;width:35.500px;background:#f4f4f4;border-right-color:#fafafa;padding-left:0;text-align:center">8</div>
<div class="abs" style="left:0;top:.5px;z-index:2"><svg style="position:absolute;left:62.600px;top:24.200px" width="12" height="12" viewBox="0 0 12 12"><path d="M9.800 3.300V.5H.5v9.300h9.300V7" fill="none" stroke="#b9b9b9" stroke-width="1"/><path d="M4.300 5.150h4.500" fill="none" stroke="#c0c0c0" stroke-width="1.200"/><path d="M8.300 3.100l2.500 2.050L8.300 7.200z" fill="#c0c0c0"/></svg><svg style="position:absolute;left:90.600px;top:8.200px" width="13" height="11" viewBox="0 0 13 11"><rect x=".5" y=".5" width="11.300" height="9" rx=".6" fill="none" stroke="#bbbbbb" stroke-width="1"/><path d="M1 1.200l5.150 4.100L11.300 1.200" fill="none" stroke="#bbbbbb" stroke-width="1"/></svg></div>
<div class="abs" style="left:0;top:0.70px;z-index:2"><svg class="im" style="left:285px;top:11.3px" width="31" height="19.5" viewBox="0 0 31 19.5"><g filter="url(#b)"><rect x="3.5" y="0.3" width="23.6" height="13.5" fill="#3d4a9a"/><path d="M15 .3h12.100v9.500z" fill="#2a3576"/><path d="M13.500 .3h3.500q1.500 7 10.100 9.500v0.800q-11-1.500-13.600-10.300z" fill="#6f79bd" opacity=".7"/><path d="M27.100 9.800v4h-14q7-4.500 14-4z" fill="#d9dbe6"/><path d="M27.100 11.600v2.200h-8q4-2.400 8-2.200z" fill="#eceadc"/><path d="M3.500 13.800h23.600l3.600 4.300q0 1-1 1h-28.700q-1 0-1-1z" fill="#27356f"/><rect x="5.5" y="14.6" width="19.6" height="1.5" fill="#3a4a8c"/></g></svg></div>
<div class="c" style="left:86px;width:50px;background:#f4f4f4;border-right-color:#fafafa"></div>
<div class="c" style="left:136px;width:120px;background:#f4f4f4;border-right-color:#ececec;padding-left:5.100px"><span style="letter-spacing:-0.157px">4718017167635</span></div>
<div class="c" style="left:256px;width:90px;background:#fff"></div>
<div class="c st" style="left:346px;width:120px;background:#67c21c;border-right:1.400px solid #fff;border-top:1px solid #d4edbf;margin-top:-1px;height:43px;padding-top:var(--pt)"><span style="letter-spacing:-0.465px">Valid</span></div>
<div class="c" style="left:466px;width:120px;background:#fff"><span style="letter-spacing:0.038px">Laptop</span></div>
<div class="c" style="left:586px;width:120px;background:#fff"><span style="letter-spacing:-0.554px">UX362FA-EL106T</span></div>
<div class="c" style="left:706px;width:120px;background:#fff"><span style="letter-spacing:-0.554px">UX362FA-EL106T</span></div>
<div class="c" style="left:826px;width:200px;background:#fff"><span style="letter-spacing:-0.296px">Asus UX362FA-EL106T 13.3 "Ultra-</span><br><span style="letter-spacing:-0.071px">Book PC with Numpad</span></div>
</div>
<div class="row" style="top:488px;height:41px;--pt:5.87px;--lh:15px">
<div class="c" style="left:0;width:50.500px;background:#fff;border-right-color:#f4f4f4"></div>
<div class="cb" style="top:14px"></div>
<div class="c" style="left:50.500px;width:35.500px;background:#f4f4f4;border-right-color:#fafafa;padding-left:0;text-align:center">9</div>
<div class="abs" style="left:0;top:.5px;z-index:2"><svg style="position:absolute;left:62.600px;top:24.200px" width="12" height="12" viewBox="0 0 12 12"><path d="M9.800 3.300V.5H.5v9.300h9.300V7" fill="none" stroke="#b9b9b9" stroke-width="1"/><path d="M4.300 5.150h4.500" fill="none" stroke="#c0c0c0" stroke-width="1.200"/><path d="M8.300 3.100l2.500 2.050L8.300 7.200z" fill="#c0c0c0"/></svg><svg style="position:absolute;left:90.600px;top:8.200px" width="13" height="11" viewBox="0 0 13 11"><rect x=".5" y=".5" width="11.300" height="9" rx=".6" fill="none" stroke="#bbbbbb" stroke-width="1"/><path d="M1 1.200l5.150 4.100L11.300 1.200" fill="none" stroke="#bbbbbb" stroke-width="1"/></svg></div>
<div class="abs" style="left:0;top:0.30px;z-index:2"><svg class="im" style="left:284.3px;top:9px" width="33" height="22.5" viewBox="0 0 33 22.5"><g filter="url(#b)"><rect x="2.9" y="0.3" width="26" height="17.3" fill="#141416"/><path d="M2.900 17.400h26l3 3.600q0 .9-1 .9h-30q-1 0-1-.9z" fill="#38383b"/><rect x="5" y="18" width="22" height="1.3" fill="#29292b"/><path d="M11 9.500l4-4 5.500-1.200 4 3.500-2.500 4-6 1.500z" fill="#587fae"/><path d="M16 6.800l3.500-1.200 2 1.800-1.600 2.200-3.500 .3z" fill="#dbe6f2"/><path d="M21 7.500l6-2.500v8.500l-7 1z" fill="#8e5826" opacity=".65"/><path d="M5 11l6-2 3 4-9 1.500z" fill="#2e3c52" opacity=".9"/></g></svg></div>
<div class="c" style="left:86px;width:50px;background:#f4f4f4;border-right-color:#fafafa"></div>
<div class="c" style="left:136px;width:120px;background:#f4f4f4;border-right-color:#ececec;padding-left:5.100px"><span style="letter-spacing:-0.157px">4718017140447</span></div>
<div class="c" style="left:256px;width:90px;background:#fff"></div>
<div class="c st" style="left:346px;width:120px;background:#67c21c;border-right:1.400px solid #fff;border-top:1px solid #d4edbf;margin-top:-1px;height:43px;padding-top:var(--pt)"><span style="letter-spacing:-0.465px">Valid</span></div>
<div class="c" style="left:466px;width:120px;background:#fff"><span style="letter-spacing:0.038px">Laptop</span></div>
<div class="c" style="left:586px;width:120px;background:#fff"><span style="letter-spacing:-0.356px">UX561UA-BO049T</span></div>
<div class="c" style="left:706px;width:120px;background:#fff"><span style="letter-spacing:-0.356px">UX561UA-BO049T</span></div>
<div class="c" style="left:826px;width:200px;background:#fff"><span style="letter-spacing:-0.250px">Hybrid PC Asus ZenBook</span><br><span style="letter-spacing:-0.257px">UX561UA-BO049T 15.6 "Touch</span></div>
</div>
<div class="row" style="top:529px;height:42px;--pt:5.87px;--lh:15px">
<div class="c" style="left:0;width:50.500px;background:#fff;border-right-color:#f4f4f4"></div>
<div class="cb" style="top:14px"></div>
<div class="c" style="left:50.500px;width:35.500px;background:#f4f4f4;border-right-color:#fafafa;padding-left:0;text-align:center">10</div>
<div class="abs" style="left:0;top:.5px;z-index:2"><svg style="position:absolute;left:62.600px;top:24.200px" width="12" height="12" viewBox="0 0 12 12"><path d="M9.800 3.300V.5H.5v9.300h9.300V7" fill="none" stroke="#b9b9b9" stroke-width="1"/><path d="M4.300 5.150h4.500" fill="none" stroke="#c0c0c0" stroke-width="1.200"/><path d="M8.300 3.100l2.500 2.050L8.300 7.200z" fill="#c0c0c0"/></svg><svg style="position:absolute;left:90.600px;top:8.200px" width="13" height="11" viewBox="0 0 13 11"><rect x=".5" y=".5" width="11.300" height="9" rx=".6" fill="none" stroke="#bbbbbb" stroke-width="1"/><path d="M1 1.200l5.150 4.100L11.300 1.200" fill="none" stroke="#bbbbbb" stroke-width="1"/></svg></div>
<div class="abs" style="left:0;top:0.90px;z-index:2"><svg class="im" style="left:288.6px;top:3.5px" width="24" height="32.5" viewBox="0 0 24 32.5"><g filter="url(#b)"><rect x="0.5" y="0.5" width="22.5" height="31" fill="#f6f6f6" stroke="#c9c9c9" stroke-width=".8"/><rect x="1" y="5.2" width="21.5" height="0.7" fill="#dcdcdc"/><rect x="1" y="25.5" width="21.5" height="0.7" fill="#e0e0e0"/><rect x="2" y="2" width="7" height="1.8" fill="#e4e4e4"/><rect x="13.5" y="1.4" width="8.5" height="1.6" fill="#5a5d61"/><rect x="11" y="2.2" width="2" height="1.6" fill="#cfcfcf"/><circle cx="11.800" cy="13.600" r="7.600" fill="#dedede" stroke="#909090" stroke-width="1.400"/><circle cx="11.800" cy="13.600" r="5" fill="#303134"/><circle cx="12.300" cy="14.100" r="2.700" fill="#85878b"/><circle cx="12.900" cy="14.600" r="1.300" fill="#d8d8d8"/></g></svg></div>
<div class="c" style="left:86px;width:50px;background:#f4f4f4;border-right-color:#fafafa"></div>
<div class="c" style="left:136px;width:120px;background:#f4f4f4;border-right-color:#ececec;padding-left:5.100px"><span style="letter-spacing:-0.157px">3838782008511</span></div>
<div class="c" style="left:256px;width:90px;background:#fff"></div>
<div class="c st" style="left:346px;width:120px;background:#e42c3a;border-right:1.400px solid #fff;border-top:1px solid #f7c3c7;margin-top:-1px;height:43px;padding-top:var(--pt)"><span style="letter-spacing:-0.131px">Unvalid</span></div>
<div class="c" style="left:466px;width:120px;background:#fff"><span style="letter-spacing:-0.112px">Washing machine</span></div>
<div class="c" style="left:586px;width:120px;background:#fff"><span style="letter-spacing:0.114px">LL front-8kg-</span><br><span style="letter-spacing:0.137px">1600trs/min</span></div>
<div class="c" style="left:706px;width:120px;background:#fff"><span style="letter-spacing:0.073px">LL frontal-8kg-</span><br><span style="letter-spacing:0.137px">1600trs/min</span></div>
<div class="c" style="left:826px;width:200px;background:#fff"><span style="letter-spacing:-0.017px">Washing machine-8kg-1400</span><br><span style="letter-spacing:0.015px">revolutions / min-Classic high</span></div>
</div>
<div class="row" style="top:571px;height:42px;--pt:5.87px;--lh:15px">
<div class="c" style="left:0;width:50.500px;background:#fff;border-right-color:#f4f4f4"></div>
<div class="cb" style="top:14px"></div>
<div class="c" style="left:50.500px;width:35.500px;background:#f4f4f4;border-right-color:#fafafa;padding-left:0;text-align:center">11</div>
<div class="abs" style="left:0;top:.5px;z-index:2"><svg style="position:absolute;left:62.600px;top:24.200px" width="12" height="12" viewBox="0 0 12 12"><path d="M9.800 3.300V.5H.5v9.300h9.300V7" fill="none" stroke="#b9b9b9" stroke-width="1"/><path d="M4.300 5.150h4.500" fill="none" stroke="#c0c0c0" stroke-width="1.200"/><path d="M8.300 3.100l2.500 2.050L8.300 7.200z" fill="#c0c0c0"/></svg><svg style="position:absolute;left:90.600px;top:8.200px" width="13" height="11" viewBox="0 0 13 11"><rect x=".5" y=".5" width="11.300" height="9" rx=".6" fill="none" stroke="#bbbbbb" stroke-width="1"/><path d="M1 1.200l5.150 4.100L11.300 1.200" fill="none" stroke="#bbbbbb" stroke-width="1"/></svg></div>
<div class="abs" style="left:0;top:0.50px;z-index:2"><svg class="im" style="left:290.3px;top:4.8px" width="21.5" height="31" viewBox="0 0 21.5 31"><g filter="url(#b)"><rect x="0.5" y="0.5" width="20.5" height="30" fill="#8e8f91" stroke="#6a6b6d" stroke-width=".8"/><rect x="1" y="1" width="19.5" height="3.6" fill="#56585b"/><rect x="11" y="1.7" width="8" height="1.7" fill="#2f3033"/><rect x="2" y="1.8" width="6" height="1.5" fill="#77797c"/><circle cx="10.300" cy="13.100" r="7.700" fill="#a9aaac" stroke="#3d3e41" stroke-width="1.500"/><circle cx="10.300" cy="13.100" r="5.200" fill="#7a7b7e" stroke="#c3c4c6" stroke-width=".8"/><circle cx="10.800" cy="13.700" r="2.800" fill="#a6a7a9"/></g></svg></div>
<div class="c" style="left:86px;width:50px;background:#f4f4f4;border-right-color:#fafafa"></div>
<div class="c" style="left:136px;width:120px;background:#f4f4f4;border-right-color:#ececec;padding-left:5.100px"><span style="letter-spacing:-0.157px">3838782330643</span></div>
<div class="c" style="left:256px;width:90px;background:#fff"></div>
<div class="c st" style="left:346px;width:120px;background:#e42c3a;border-right:1.400px solid #fff;border-top:1px solid #f7c3c7;margin-top:-1px;height:43px;padding-top:var(--pt)"><span style="letter-spacing:-0.131px">Unvalid</span></div>
<div class="c" style="left:466px;width:120px;background:#fff"><span style="letter-spacing:-0.112px">Washing machine</span></div>
<div class="c" style="left:586px;width:120px;background:#fff"><span style="letter-spacing:0.114px">LL front-7kg-</span><br><span style="letter-spacing:0.137px">1400trs/min</span></div>
<div class="c" style="left:706px;width:120px;background:#fff"><span style="letter-spacing:0.073px">LL frontal-7kg-</span><br><span style="letter-spacing:0.137px">1400trs/min</span></div>
<div class="c" style="left:826px;width:200px;background:#fff"><span style="letter-spacing:-0.077px">Washing machine-Intensive use-</span><br><span style="letter-spacing:-0.129px">7kg-1400 rpm-LCD screen-Energy</span></div>
</div>
<div class="abs" style="left:1013px;top:156px;width:17px;height:445px;background:#f1f1f1"></div>
<div class="abs" style="left:1015px;top:173.300px;width:13px;height:219.400px;background:#c1c1c1"></div>
<svg class="abs" style="left:1018px;top:162.500px" width="7.400" height="4.500" viewBox="0 0 9 5"><path d="M0 5L4.500 0 9 5z" fill="#a3a3a3"/></svg>
<svg class="abs" style="left:1017px;top:589px" width="9" height="6" viewBox="0 0 9 6"><path d="M0 .5L4.500 5.500 9 .5z" fill="#505050"/></svg>
<div class="abs" style="left:0;top:601px;width:1030px;height:17px;background:#f1f1f1"></div>
<div class="abs" style="left:18px;top:603px;width:376px;height:12.800px;background:#c1c1c1"></div>
<svg class="abs" style="left:6px;top:604.500px" width="6" height="9" viewBox="0 0 6 9"><path d="M5.500 0L.5 4.500 5.500 9z" fill="#858585"/></svg>
<svg class="abs" style="left:1001px;top:604.500px" width="6" height="9" viewBox="0 0 6 9"><path d="M.5 0L5.500 4.500.5 9z" fill="#505050"/></svg>
<div class="abs" style="left:1013px;top:601px;width:17px;height:17px;background:#dcdcdc"></div>
<div id="ft"></div>
<div class="abs" style="left:0;top:619.700px;width:160px;height:5px;background:#468ffa"></div>
<div class="ftt" style="left:20px;top:635px;color:#4a8fe6;-webkit-text-stroke:.2px #4a8fe6"><span style="letter-spacing:0.339px">Demo Products</span></div>
<svg class="abs" style="left:125px;top:636px" width="15" height="15" viewBox="0 0 15 15"><g fill="none" stroke="#4a8fe6" stroke-width="1.100"><circle cx="7.500" cy="7.500" r="2.200"/><path d="M6.300 1.200h2.400l.4 1.700 1.300.7 1.600-.6 1.200 2.100-1.200 1.200v1.400l1.200 1.200-1.200 2.100-1.600-.6-1.300.7-.4 1.700H6.300l-.4-1.700-1.300-.7-1.600.6-1.200-2.100L3 7.700V6.300L1.800 5.100 3 3l1.600.6 1.300-.7z" stroke-linejoin="round"/></g></svg>
<svg class="abs" style="left:640px;top:635px" width="7" height="11" viewBox="0 0 7 11"><path d="M6 .7L1.200 5.500 6 10.300" fill="none" stroke="#c4c4c4" stroke-width="1.200"/></svg>
<div class="abs" style="left:656.200px;top:628.200px;width:23.400px;height:23.600px;border:1px solid #5b9bf5;border-radius:2px;background:#fff;color:#4a8cee;-webkit-text-stroke:.3px #4a8cee;font-size:14px;line-height:22.600px;text-align:center">1</div>
<svg class="abs" style="left:688px;top:635px" width="7" height="11" viewBox="0 0 7 11"><path d="M1 .7l4.800 4.800L1 10.300" fill="none" stroke="#c4c4c4" stroke-width="1.200"/></svg>
<div class="abs" style="left:706.200px;top:628.200px;width:95.300px;height:23.600px;border:1px solid #d9d9d9;border-radius:2px;background:#fff"></div>
<div class="ftt" style="left:714.500px;top:632px"><span style="letter-spacing:0.275px">25 / page</span></div>
<svg style="position:absolute;left:780px;top:638px" width="10" height="7.00" viewBox="0 0 10 7"><path d="M0.800 0.900L5 5.900l4.200-5" fill="none" stroke="#c4c4c4" stroke-width="1.10"/></svg>
<div class="ftt" style="left:807.500px;top:632px"><span style="letter-spacing:-0.502px">(20)</span></div>
<div class="ftt" style="left:847px;top:632px"><span style="letter-spacing:0.063px">Zoom: 100%</span></div>
<svg class="abs" style="left:937px;top:627.7px" width="24" height="24" viewBox="0 0 24 24"><circle cx="12" cy="12" r="11.200" fill="#fff" stroke="#d9d9d9" stroke-width="1"/><path d="M6.200 14.300h11.700" stroke="#1a1a1a" stroke-width="1.800"/></svg>
<svg class="abs" style="left:966px;top:627.7px" width="24" height="24" viewBox="0 0 24 24"><circle cx="12" cy="12" r="11.200" fill="#fff" stroke="#d9d9d9" stroke-width="1"/><path d="M7 14.200h10.400M12.200 8.100v12.200" stroke="#1a1a1a" stroke-width="1.700"/></svg>
<svg class="abs" style="left:995px;top:627.8px" width="24" height="24" viewBox="0 0 24 24"><circle cx="12" cy="12" r="11.200" fill="#fff" stroke="#7db2f7" stroke-width="1"/><g fill="none" stroke="#5b9cf3" stroke-width="1.200"><path d="M6 10.500A6.300 6.300 0 0 1 17.300 8.300"/><path d="M18 13.500A6.300 6.300 0 0 1 6.700 15.700"/><path d="M17.600 5.300v3.100h-3.100M6.400 18.700v-3.100h3.100"/></g></svg>
<div class="abs" style="left:0;top:658.500px;width:1030px;height:1.500px;background:#eeeeee"></div>
<svg class="abs" style="left:0;top:650px" width="6" height="10" viewBox="0 0 6 10"><path d="M0 2.500C1 6 2 8 3.500 10H0z" fill="#3a3a3a"/></svg>
<svg class="abs" style="left:1020px;top:650px" width="10" height="10" viewBox="0 0 10 10"><path d="M10 2C9.500 6 6 9.500 2 10h8z" fill="#cfcfcf"/></svg>
</div></body></html>
